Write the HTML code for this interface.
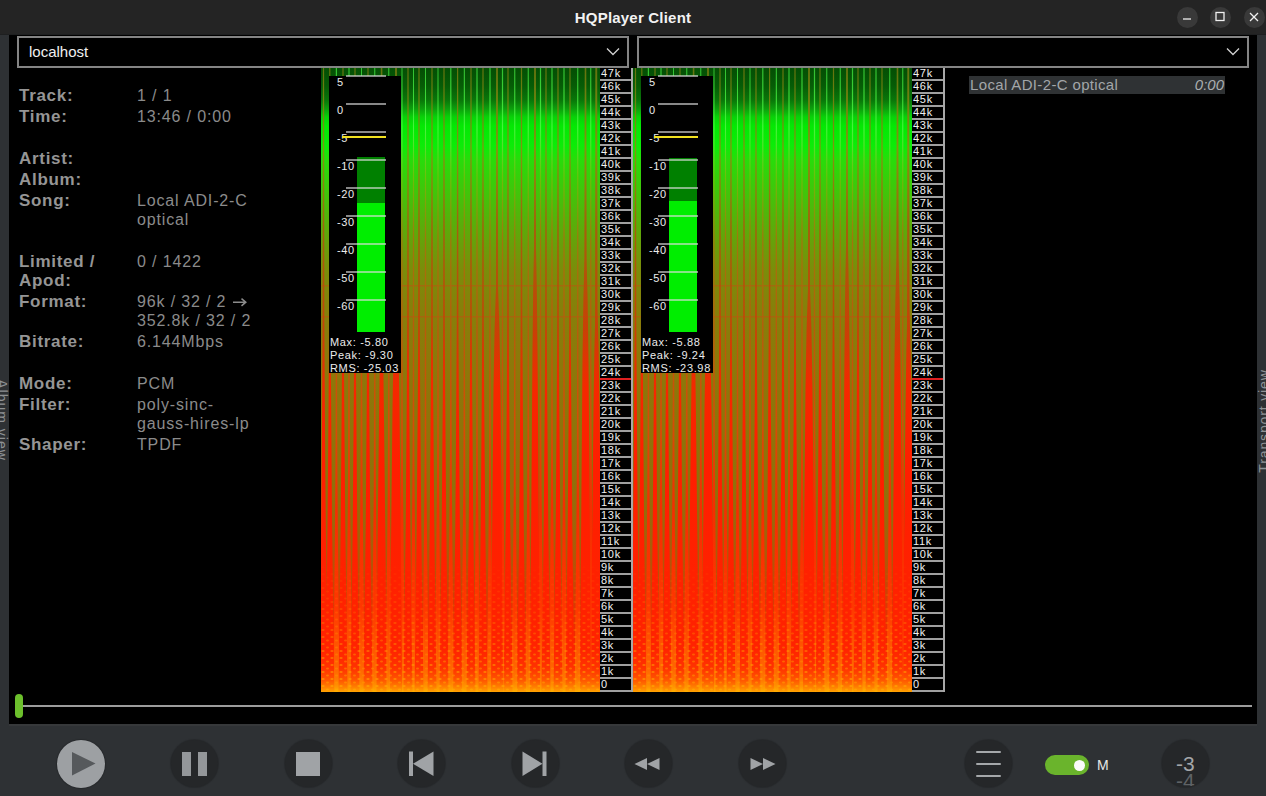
<!DOCTYPE html><html><head><meta charset="utf-8"><title>HQPlayer Client</title><style>
html,body{margin:0;padding:0}
body{width:1266px;height:796px;position:relative;overflow:hidden;background:#2e3134;font-family:"Liberation Sans",sans-serif}
.abs{position:absolute}
#title{position:absolute;left:0;top:0;width:1266px;height:34px;background:#242424;border-bottom:1px solid #1e1f20}
#title .t{position:absolute;left:0;width:1266px;top:9px;text-align:center;color:#f2f2f2;font-weight:bold;font-size:15px;letter-spacing:0.2px}
.wb{position:absolute;top:7px;width:21px;height:21px;border-radius:50%;background:#393939}
#main{position:absolute;left:9px;top:35px;width:1248px;height:689px;background:#000}
.combo{position:absolute;top:36px;height:28px;border:2px solid #848484;background:#000}
.combo .txt{position:absolute;left:10px;top:5px;color:#f0f0f0;font-size:15px}
.lab{position:absolute;left:19px;color:#959595;font-weight:bold;font-size:17px;line-height:19px;letter-spacing:0.7px}
.val{position:absolute;left:137px;color:#8b8b8b;font-size:16px;line-height:19px;letter-spacing:0.85px}
.fl{position:absolute;color:#f0f0f0;font-size:11px;line-height:12px;letter-spacing:0.7px;width:30px;white-space:nowrap}
.gl{position:absolute;width:33px;height:2px}
.mbox{position:absolute;width:72px;height:297px;background:#000}
.ml{position:absolute;color:#ececec;font-size:11px;line-height:13px;letter-spacing:0.65px;white-space:nowrap}
.btn{position:absolute;top:740px;width:47px;height:47px;border-radius:50%;background:#252729;box-shadow:0 0 1px 1px rgba(0,0,0,0.18)}
</style></head><body><div id="title"><div class="t">HQPlayer Client</div><div class="wb" style="left:1177px"></div><div class="wb" style="left:1210px"></div><div class="wb" style="left:1244px"></div></div><svg class="abs" style="left:1170px;top:0" width="96" height="36"><g stroke="#f0f0f0" stroke-width="1.3" fill="none"><line x1="13" y1="19" x2="21" y2="19"/><rect x="46" y="12.5" width="8" height="8"/><line x1="80" y1="13" x2="88" y2="21"/><line x1="88" y1="13" x2="80" y2="21"/></g></svg><div id="main"></div><div class="abs" style="left:9px;top:724px;width:1248px;height:2px;background:#36383a"></div><div class="abs" style="left:0;top:36px;width:9px;height:688px;overflow:hidden"><div class="abs" style="left:-47.85px;top:376px;width:100px;height:16px;transform:rotate(90deg);color:#8e9194;font-size:14px;line-height:16px;letter-spacing:1px;white-space:nowrap;text-align:center">Album view</div></div><div class="abs" style="left:1257px;top:36px;width:9px;height:688px;overflow:hidden"><div class="abs" style="left:-52.83px;top:376.5px;width:120px;height:16px;transform:rotate(-90deg);color:#8e9194;font-size:14px;line-height:16px;letter-spacing:0.86px;white-space:nowrap;text-align:center">Transport view</div></div><div class="combo" style="left:17px;width:608px"><div class="txt">localhost</div></div><div class="combo" style="left:637px;width:608px"></div><svg class="abs" style="left:605px;top:46px" width="16" height="12"><polyline points="2,2.5 8,8.5 14,2.5" stroke="#d0d0d0" stroke-width="1.3" fill="none"/></svg><svg class="abs" style="left:1225px;top:46px" width="16" height="12"><polyline points="2,2.5 8,8.5 14,2.5" stroke="#d0d0d0" stroke-width="1.3" fill="none"/></svg><div class="lab" style="top:86px">Track:</div><div class="val" style="top:86px">1 / 1</div><div class="lab" style="top:107px">Time:</div><div class="val" style="top:107px">13:46 / 0:00</div><div class="lab" style="top:149px">Artist:</div><div class="val" style="top:149px"></div><div class="lab" style="top:170px">Album:</div><div class="val" style="top:170px"></div><div class="lab" style="top:191px">Song:</div><div class="val" style="top:191px">Local ADI-2-C<br>optical</div><div class="lab" style="top:252px">Limited /<br>Apod:</div><div class="val" style="top:252px">0 / 1422</div><div class="lab" style="top:292px">Format:</div><div class="val" style="top:292px">96k / 32 / 2 <svg width="16" height="10" style="vertical-align:0px"><path d="M1 5.2H13.5M9.5 1.6L13.8 5.2L9.5 8.8" stroke="#8b8b8b" stroke-width="1.5" fill="none"/></svg><br>352.8k / 32 / 2</div><div class="lab" style="top:332px">Bitrate:</div><div class="val" style="top:332px">6.144Mbps</div><div class="lab" style="top:374px">Mode:</div><div class="val" style="top:374px">PCM</div><div class="lab" style="top:395px">Filter:</div><div class="val" style="top:395px">poly-sinc-<br>gauss-hires-lp</div><div class="lab" style="top:435px">Shaper:</div><div class="val" style="top:435px">TPDF</div><div class="abs" style="left:321px;top:68px"><svg width="279" height="624" viewBox="0 0 279 624" style="display:block"><defs><linearGradient id="abg" gradientUnits="userSpaceOnUse" x1="0" y1="0" x2="0" y2="624"><stop offset="0.0000" stop-color="#044e04"/><stop offset="0.0288" stop-color="#065c06"/><stop offset="0.0513" stop-color="#097609"/><stop offset="0.0657" stop-color="#0ca00c"/><stop offset="0.0785" stop-color="#08d208"/><stop offset="0.0929" stop-color="#04e804"/><stop offset="0.1250" stop-color="#0cec08"/><stop offset="0.1474" stop-color="#28dc0a"/><stop offset="0.2115" stop-color="#46c00a"/><stop offset="0.2644" stop-color="#5fa80a"/><stop offset="0.3205" stop-color="#7a8e0a"/><stop offset="0.3846" stop-color="#86800a"/><stop offset="0.4808" stop-color="#8d780a"/><stop offset="0.5769" stop-color="#8e740a"/><stop offset="0.6571" stop-color="#8f710a"/><stop offset="0.7212" stop-color="#98690a"/><stop offset="0.7853" stop-color="#af5808"/><stop offset="0.8494" stop-color="#d23e04"/><stop offset="0.9054" stop-color="#f02a01"/><stop offset="0.9615" stop-color="#ff2600"/><stop offset="1.0000" stop-color="#ff3c00"/></linearGradient><linearGradient id="ars" gradientUnits="userSpaceOnUse" x1="0" y1="0" x2="0" y2="624"><stop offset="0.0000" stop-color="#64730f"/><stop offset="0.1282" stop-color="#82960f"/><stop offset="0.2564" stop-color="#a55f0a"/><stop offset="0.4167" stop-color="#c84106"/><stop offset="0.5128" stop-color="#f52800"/><stop offset="0.6410" stop-color="#ff1e00"/><stop offset="0.9295" stop-color="#ff2300"/><stop offset="1.0000" stop-color="#ff4600"/></linearGradient><linearGradient id="aos" gradientUnits="userSpaceOnUse" x1="0" y1="0" x2="0" y2="624"><stop offset="0.0000" stop-color="#32be32"/><stop offset="0.0962" stop-color="#46f53c"/><stop offset="0.1763" stop-color="#6ebe0a"/><stop offset="0.2724" stop-color="#a0780a"/><stop offset="0.4167" stop-color="#b95a0a"/><stop offset="0.5769" stop-color="#d74b05"/><stop offset="0.7051" stop-color="#f52d00"/><stop offset="0.8654" stop-color="#ff3700"/><stop offset="1.0000" stop-color="#ff7800"/></linearGradient><pattern id="asp" patternUnits="userSpaceOnUse" width="9" height="7"><ellipse cx="2" cy="2" rx="1.7" ry="1.1" fill="#ff9c00"/><ellipse cx="6.5" cy="5.5" rx="1.5" ry="1.0" fill="#ff8800"/></pattern><linearGradient id="amg" x1="0" y1="0" x2="0" y2="1"><stop offset="0" stop-color="#fff" stop-opacity="0"/><stop offset="0.5" stop-color="#fff" stop-opacity="0.35"/><stop offset="1" stop-color="#fff" stop-opacity="0.8"/></linearGradient><mask id="amk" maskContentUnits="userSpaceOnUse"><rect x="0" y="494" width="279" height="130" fill="url(#amg)"/></mask><linearGradient id="abot" x1="0" y1="0" x2="0" y2="1"><stop offset="0" stop-color="#ff9000" stop-opacity="0"/><stop offset="0.5" stop-color="#ffa000" stop-opacity="0.25"/><stop offset="1" stop-color="#ffc000" stop-opacity="0.75"/></linearGradient></defs><rect x="0" y="0" width="279" height="624" fill="url(#abg)"/><rect x="0" y="217" width="279" height="1.5" fill="#c05010" opacity="0.5"/><rect x="0" y="248" width="279" height="1.5" fill="#c05010" opacity="0.5"/><polygon points="14.8,0.0 14.7,300.0 14.6,360.0 14.3,420.0 13.8,480.0 12.9,560.0 12.2,624.0 18.6,624.0 17.9,560.0 17.0,480.0 16.5,420.0 16.2,360.0 16.1,300.0 16.0,0.0" fill="url(#aos)"/><polygon points="27.4,0.0 27.3,300.0 27.1,360.0 26.9,420.0 26.4,480.0 25.5,560.0 24.8,624.0 31.2,624.0 30.5,560.0 29.6,480.0 29.1,420.0 28.9,360.0 28.7,300.0 28.6,0.0" fill="url(#aos)"/><polygon points="40.0,0.0 39.8,300.0 39.6,360.0 39.4,420.0 38.9,480.0 38.0,560.0 37.2,624.0 43.8,624.0 43.0,560.0 42.1,480.0 41.6,420.0 41.4,360.0 41.2,300.0 41.0,0.0" fill="url(#aos)"/><polygon points="53.2,0.0 53.1,300.0 52.9,360.0 52.7,420.0 52.2,480.0 51.3,560.0 50.5,624.0 57.0,624.0 56.3,560.0 55.4,480.0 54.9,420.0 54.6,360.0 54.5,300.0 54.3,0.0" fill="url(#aos)"/><polygon points="67.2,0.0 67.1,300.0 67.0,360.0 66.7,420.0 66.2,480.0 65.3,560.0 64.5,624.0 71.0,624.0 70.3,560.0 69.4,480.0 68.9,420.0 68.6,360.0 68.5,300.0 68.3,0.0" fill="url(#aos)"/><polygon points="80.5,0.0 80.3,300.0 80.2,360.0 79.9,420.0 79.4,480.0 78.5,560.0 77.8,624.0 84.2,624.0 83.5,560.0 82.6,480.0 82.1,420.0 81.8,360.0 81.7,300.0 81.5,0.0" fill="url(#aos)"/><polygon points="92.0,0.0 91.8,300.0 91.7,360.0 91.4,420.0 90.9,480.0 90.0,560.0 89.2,624.0 95.8,624.0 95.0,560.0 94.1,480.0 93.6,420.0 93.3,360.0 93.2,300.0 93.0,0.0" fill="url(#aos)"/><polygon points="104.0,0.0 103.8,300.0 103.7,360.0 103.4,420.0 102.9,480.0 102.0,560.0 101.2,624.0 107.8,624.0 107.0,560.0 106.1,480.0 105.6,420.0 105.3,360.0 105.2,300.0 105.0,0.0" fill="url(#aos)"/><polygon points="116.5,0.0 116.3,300.0 116.2,360.0 115.9,420.0 115.4,480.0 114.5,560.0 113.8,624.0 120.2,624.0 119.5,560.0 118.6,480.0 118.1,420.0 117.8,360.0 117.7,300.0 117.5,0.0" fill="url(#aos)"/><polygon points="129.2,0.0 129.1,300.0 129.0,360.0 128.7,420.0 128.2,480.0 127.3,560.0 126.6,624.0 133.1,624.0 132.3,560.0 131.4,480.0 130.9,420.0 130.7,360.0 130.5,300.0 130.4,0.0" fill="url(#aos)"/><polygon points="142.8,0.0 142.6,300.0 142.5,360.0 142.2,420.0 141.7,480.0 140.8,560.0 140.1,624.0 146.6,624.0 145.8,560.0 144.9,480.0 144.4,420.0 144.2,360.0 144.0,300.0 143.9,0.0" fill="url(#aos)"/><polygon points="155.4,0.0 155.3,300.0 155.2,360.0 154.9,420.0 154.4,480.0 153.5,560.0 152.8,624.0 159.2,624.0 158.5,560.0 157.6,480.0 157.1,420.0 156.8,360.0 156.7,300.0 156.6,0.0" fill="url(#aos)"/><polygon points="168.4,0.0 168.3,300.0 168.2,360.0 167.9,420.0 167.4,480.0 166.5,560.0 165.8,624.0 172.2,624.0 171.5,560.0 170.6,480.0 170.1,420.0 169.8,360.0 169.7,300.0 169.6,0.0" fill="url(#aos)"/><polygon points="180.9,0.0 180.8,300.0 180.7,360.0 180.4,420.0 179.9,480.0 179.0,560.0 178.2,624.0 184.8,624.0 184.0,560.0 183.1,480.0 182.6,420.0 182.3,360.0 182.2,300.0 182.1,0.0" fill="url(#aos)"/><polygon points="193.2,0.0 193.1,300.0 192.9,360.0 192.7,420.0 192.2,480.0 191.2,560.0 190.5,624.0 197.0,624.0 196.2,560.0 195.3,480.0 194.8,420.0 194.6,360.0 194.4,300.0 194.3,0.0" fill="url(#aos)"/><polygon points="206.7,0.0 206.6,300.0 206.4,360.0 206.2,420.0 205.7,480.0 204.8,560.0 204.0,624.0 210.5,624.0 209.8,560.0 208.8,480.0 208.3,420.0 208.1,360.0 207.9,300.0 207.8,0.0" fill="url(#aos)"/><polygon points="218.9,0.0 218.8,300.0 218.7,360.0 218.4,420.0 217.9,480.0 217.0,560.0 216.2,624.0 222.8,624.0 222.0,560.0 221.1,480.0 220.6,420.0 220.3,360.0 220.2,300.0 220.1,0.0" fill="url(#aos)"/><polygon points="230.4,0.0 230.3,300.0 230.2,360.0 229.9,420.0 229.4,480.0 228.5,560.0 227.8,624.0 234.2,624.0 233.5,560.0 232.6,480.0 232.1,420.0 231.8,360.0 231.7,300.0 231.6,0.0" fill="url(#aos)"/><polygon points="242.4,0.0 242.3,300.0 242.2,360.0 241.9,420.0 241.4,480.0 240.5,560.0 239.8,624.0 246.2,624.0 245.5,560.0 244.6,480.0 244.1,420.0 243.8,360.0 243.7,300.0 243.6,0.0" fill="url(#aos)"/><polygon points="256.2,0.0 256.1,300.0 255.9,360.0 255.7,420.0 255.2,480.0 254.2,560.0 253.5,624.0 260.0,624.0 259.2,560.0 258.4,480.0 257.9,420.0 257.6,360.0 257.4,300.0 257.3,0.0" fill="url(#aos)"/><polygon points="269.2,0.0 269.1,300.0 268.9,360.0 268.6,420.0 268.1,480.0 267.2,560.0 266.5,624.0 273.0,624.0 272.2,560.0 271.4,480.0 270.9,420.0 270.6,360.0 270.4,300.0 270.3,0.0" fill="url(#aos)"/><polygon points="1.9,0.0 1.7,250.0 1.2,330.0 0.7,400.0 0.2,460.0 -0.8,540.0 -2.0,624.0 7.0,624.0 5.8,540.0 4.8,460.0 4.3,400.0 3.8,330.0 3.3,250.0 3.1,0.0" fill="url(#ars)"/><polygon points="8.2,0.0 8.0,250.0 7.6,330.0 7.0,400.0 6.5,460.0 5.5,540.0 4.3,624.0 13.3,624.0 12.1,540.0 11.1,460.0 10.6,400.0 10.1,330.0 9.6,250.0 9.4,0.0" fill="url(#ars)"/><polygon points="21.4,0.0 21.2,250.0 20.8,330.0 20.2,400.0 19.7,460.0 18.7,540.0 17.5,624.0 26.5,624.0 25.3,540.0 24.3,460.0 23.8,400.0 23.2,330.0 22.8,250.0 22.6,0.0" fill="url(#ars)"/><polygon points="33.4,0.0 33.2,250.0 32.8,330.0 32.2,400.0 31.7,460.0 30.7,540.0 29.5,624.0 38.5,624.0 37.3,540.0 36.3,460.0 35.8,400.0 35.2,330.0 34.8,250.0 34.6,0.0" fill="url(#ars)"/><polygon points="46.4,0.0 46.2,250.0 45.8,330.0 45.2,400.0 44.7,460.0 43.7,540.0 42.5,624.0 51.5,624.0 50.3,540.0 49.3,460.0 48.8,400.0 48.2,330.0 47.8,250.0 47.6,0.0" fill="url(#ars)"/><polygon points="60.0,0.0 59.8,250.0 59.4,330.0 58.8,400.0 58.3,460.0 57.3,540.0 56.1,624.0 65.1,624.0 63.9,540.0 62.9,460.0 62.4,400.0 61.9,330.0 61.4,250.0 61.2,0.0" fill="url(#ars)"/><polygon points="74.4,0.0 74.2,250.0 73.8,330.0 73.2,400.0 72.7,460.0 71.7,540.0 70.5,624.0 79.5,624.0 78.3,540.0 77.3,460.0 76.8,400.0 76.2,330.0 75.8,250.0 75.6,0.0" fill="url(#ars)"/><polygon points="86.4,0.0 86.2,250.0 85.8,330.0 85.2,400.0 84.7,460.0 83.7,540.0 82.5,624.0 91.5,624.0 90.3,540.0 89.3,460.0 88.8,400.0 88.2,330.0 87.8,250.0 87.6,0.0" fill="url(#ars)"/><polygon points="97.4,0.0 97.2,250.0 96.8,330.0 96.2,400.0 95.7,460.0 94.7,540.0 93.5,624.0 102.5,624.0 101.3,540.0 100.3,460.0 99.8,400.0 99.2,330.0 98.8,250.0 98.6,0.0" fill="url(#ars)"/><polygon points="110.4,0.0 110.2,250.0 109.8,330.0 109.2,400.0 108.7,460.0 107.7,540.0 106.5,624.0 115.5,624.0 114.3,540.0 113.3,460.0 112.8,400.0 112.2,330.0 111.8,250.0 111.6,0.0" fill="url(#ars)"/><polygon points="122.4,0.0 122.2,250.0 121.8,330.0 121.2,400.0 120.7,460.0 119.7,540.0 118.5,624.0 127.5,624.0 126.3,540.0 125.3,460.0 124.8,400.0 124.2,330.0 123.8,250.0 123.6,0.0" fill="url(#ars)"/><polygon points="136.0,0.0 135.8,250.0 135.3,330.0 134.8,400.0 134.3,460.0 133.3,540.0 132.1,624.0 141.1,624.0 139.9,540.0 138.9,460.0 138.4,400.0 137.8,330.0 137.4,250.0 137.2,0.0" fill="url(#ars)"/><polygon points="149.4,0.0 149.2,250.0 148.8,330.0 148.2,400.0 147.7,460.0 146.7,540.0 145.5,624.0 154.5,624.0 153.3,540.0 152.3,460.0 151.8,400.0 151.2,330.0 150.8,250.0 150.6,0.0" fill="url(#ars)"/><polygon points="161.4,0.0 161.2,250.0 160.8,330.0 160.2,400.0 159.7,460.0 158.7,540.0 157.5,624.0 166.5,624.0 165.3,540.0 164.3,460.0 163.8,400.0 163.2,330.0 162.8,250.0 162.6,0.0" fill="url(#ars)"/><polygon points="175.4,0.0 175.2,250.0 174.8,330.0 174.2,400.0 173.7,460.0 172.7,540.0 171.5,624.0 180.5,624.0 179.3,540.0 178.3,460.0 177.8,400.0 177.2,330.0 176.8,250.0 176.6,0.0" fill="url(#ars)"/><polygon points="186.4,0.0 186.2,250.0 185.8,330.0 185.2,400.0 184.7,460.0 183.7,540.0 182.5,624.0 191.5,624.0 190.3,540.0 189.3,460.0 188.8,400.0 188.2,330.0 187.8,250.0 187.6,0.0" fill="url(#ars)"/><polygon points="199.9,0.0 199.7,250.0 199.2,330.0 198.7,400.0 198.2,460.0 197.2,540.0 196.0,624.0 205.0,624.0 203.8,540.0 202.8,460.0 202.3,400.0 201.8,330.0 201.3,250.0 201.1,0.0" fill="url(#ars)"/><polygon points="213.4,0.0 213.2,250.0 212.8,330.0 212.2,400.0 211.7,460.0 210.7,540.0 209.5,624.0 218.5,624.0 217.3,540.0 216.3,460.0 215.8,400.0 215.2,330.0 214.8,250.0 214.6,0.0" fill="url(#ars)"/><polygon points="224.4,0.0 224.2,250.0 223.8,330.0 223.2,400.0 222.7,460.0 221.7,540.0 220.5,624.0 229.5,624.0 228.3,540.0 227.3,460.0 226.8,400.0 226.2,330.0 225.8,250.0 225.6,0.0" fill="url(#ars)"/><polygon points="236.4,0.0 236.2,250.0 235.8,330.0 235.2,400.0 234.7,460.0 233.7,540.0 232.5,624.0 241.5,624.0 240.3,540.0 239.3,460.0 238.8,400.0 238.2,330.0 237.8,250.0 237.6,0.0" fill="url(#ars)"/><polygon points="248.4,0.0 248.2,250.0 247.8,330.0 247.2,400.0 246.7,460.0 245.7,540.0 244.5,624.0 253.5,624.0 252.3,540.0 251.3,460.0 250.8,400.0 250.2,330.0 249.8,250.0 249.6,0.0" fill="url(#ars)"/><polygon points="263.9,0.0 263.7,250.0 263.2,330.0 262.7,400.0 262.2,460.0 261.2,540.0 260.0,624.0 269.0,624.0 267.8,540.0 266.8,460.0 266.3,400.0 265.8,330.0 265.3,250.0 265.1,0.0" fill="url(#ars)"/><polygon points="274.4,0.0 274.2,250.0 273.8,330.0 273.2,400.0 272.7,460.0 271.7,540.0 270.5,624.0 279.5,624.0 278.3,540.0 277.3,460.0 276.8,400.0 276.2,330.0 275.8,250.0 275.6,0.0" fill="url(#ars)"/><polygon points="59.8,0.0 59.5,250.0 58.8,290.0 58.0,350.0 56.5,480.0 55.5,624.0 65.5,624.0 64.5,480.0 63.0,350.0 62.2,290.0 61.5,250.0 61.2,0.0" fill="url(#ars)"/><polygon points="74.2,0.0 74.0,240.0 72.5,280.0 71.5,340.0 70.0,480.0 69.0,624.0 81.0,624.0 80.0,480.0 78.5,340.0 77.5,280.0 76.0,240.0 75.8,0.0" fill="url(#ars)"/><polygon points="175.2,0.0 175.0,220.0 173.6,260.0 172.5,320.0 171.0,480.0 170.0,624.0 182.0,624.0 181.0,480.0 179.5,320.0 178.4,260.0 177.0,220.0 176.8,0.0" fill="url(#ars)"/><polygon points="213.2,0.0 213.0,180.0 212.2,220.0 211.5,280.0 210.0,480.0 209.0,624.0 219.0,624.0 218.0,480.0 216.5,280.0 215.8,220.0 215.0,180.0 214.8,0.0" fill="url(#ars)"/><polygon points="263.8,0.0 263.5,190.0 262.4,230.0 261.5,290.0 260.0,480.0 259.0,624.0 270.0,624.0 269.0,480.0 267.5,290.0 266.6,230.0 265.5,190.0 265.2,0.0" fill="url(#ars)"/><polygon points="274.8,0.0 274.5,240.0 273.4,280.0 272.5,340.0 271.0,480.0 270.0,624.0 281.0,624.0 280.0,480.0 278.5,340.0 277.6,280.0 276.5,240.0 276.2,0.0" fill="url(#ars)"/><rect x="0" y="494" width="279" height="130" fill="url(#asp)" mask="url(#amk)"/><rect x="0" y="600" width="279" height="24" fill="url(#abot)"/></svg></div><div class="abs" style="left:633px;top:68px"><svg width="279" height="624" viewBox="0 0 279 624" style="display:block"><defs><linearGradient id="bbg" gradientUnits="userSpaceOnUse" x1="0" y1="0" x2="0" y2="624"><stop offset="0.0000" stop-color="#044e04"/><stop offset="0.0288" stop-color="#065c06"/><stop offset="0.0513" stop-color="#097609"/><stop offset="0.0657" stop-color="#0ca00c"/><stop offset="0.0785" stop-color="#08d208"/><stop offset="0.0929" stop-color="#04e804"/><stop offset="0.1250" stop-color="#0cec08"/><stop offset="0.1474" stop-color="#28dc0a"/><stop offset="0.2115" stop-color="#46c00a"/><stop offset="0.2644" stop-color="#5fa80a"/><stop offset="0.3205" stop-color="#7a8e0a"/><stop offset="0.3846" stop-color="#86800a"/><stop offset="0.4808" stop-color="#8d780a"/><stop offset="0.5769" stop-color="#8e740a"/><stop offset="0.6571" stop-color="#8f710a"/><stop offset="0.7212" stop-color="#98690a"/><stop offset="0.7853" stop-color="#af5808"/><stop offset="0.8494" stop-color="#d23e04"/><stop offset="0.9054" stop-color="#f02a01"/><stop offset="0.9615" stop-color="#ff2600"/><stop offset="1.0000" stop-color="#ff3c00"/></linearGradient><linearGradient id="brs" gradientUnits="userSpaceOnUse" x1="0" y1="0" x2="0" y2="624"><stop offset="0.0000" stop-color="#64730f"/><stop offset="0.1282" stop-color="#82960f"/><stop offset="0.2564" stop-color="#a55f0a"/><stop offset="0.4167" stop-color="#c84106"/><stop offset="0.5128" stop-color="#f52800"/><stop offset="0.6410" stop-color="#ff1e00"/><stop offset="0.9295" stop-color="#ff2300"/><stop offset="1.0000" stop-color="#ff4600"/></linearGradient><linearGradient id="bos" gradientUnits="userSpaceOnUse" x1="0" y1="0" x2="0" y2="624"><stop offset="0.0000" stop-color="#32be32"/><stop offset="0.0962" stop-color="#46f53c"/><stop offset="0.1763" stop-color="#6ebe0a"/><stop offset="0.2724" stop-color="#a0780a"/><stop offset="0.4167" stop-color="#b95a0a"/><stop offset="0.5769" stop-color="#d74b05"/><stop offset="0.7051" stop-color="#f52d00"/><stop offset="0.8654" stop-color="#ff3700"/><stop offset="1.0000" stop-color="#ff7800"/></linearGradient><pattern id="bsp" patternUnits="userSpaceOnUse" width="9" height="7"><ellipse cx="2" cy="2" rx="1.7" ry="1.1" fill="#ff9c00"/><ellipse cx="6.5" cy="5.5" rx="1.5" ry="1.0" fill="#ff8800"/></pattern><linearGradient id="bmg" x1="0" y1="0" x2="0" y2="1"><stop offset="0" stop-color="#fff" stop-opacity="0"/><stop offset="0.5" stop-color="#fff" stop-opacity="0.35"/><stop offset="1" stop-color="#fff" stop-opacity="0.8"/></linearGradient><mask id="bmk" maskContentUnits="userSpaceOnUse"><rect x="0" y="494" width="279" height="130" fill="url(#bmg)"/></mask><linearGradient id="bbot" x1="0" y1="0" x2="0" y2="1"><stop offset="0" stop-color="#ff9000" stop-opacity="0"/><stop offset="0.5" stop-color="#ffa000" stop-opacity="0.25"/><stop offset="1" stop-color="#ffc000" stop-opacity="0.75"/></linearGradient></defs><rect x="0" y="0" width="279" height="624" fill="url(#bbg)"/><rect x="0" y="217" width="279" height="1.5" fill="#c05010" opacity="0.5"/><rect x="0" y="248" width="279" height="1.5" fill="#c05010" opacity="0.5"/><polygon points="14.8,0.0 14.7,300.0 14.6,360.0 14.3,420.0 13.8,480.0 12.9,560.0 12.2,624.0 18.6,624.0 17.9,560.0 17.0,480.0 16.5,420.0 16.2,360.0 16.1,300.0 16.0,0.0" fill="url(#bos)"/><polygon points="27.4,0.0 27.3,300.0 27.1,360.0 26.9,420.0 26.4,480.0 25.5,560.0 24.8,624.0 31.2,624.0 30.5,560.0 29.6,480.0 29.1,420.0 28.9,360.0 28.7,300.0 28.6,0.0" fill="url(#bos)"/><polygon points="40.0,0.0 39.8,300.0 39.6,360.0 39.4,420.0 38.9,480.0 38.0,560.0 37.2,624.0 43.8,624.0 43.0,560.0 42.1,480.0 41.6,420.0 41.4,360.0 41.2,300.0 41.0,0.0" fill="url(#bos)"/><polygon points="53.2,0.0 53.1,300.0 52.9,360.0 52.7,420.0 52.2,480.0 51.3,560.0 50.5,624.0 57.0,624.0 56.3,560.0 55.4,480.0 54.9,420.0 54.6,360.0 54.5,300.0 54.3,0.0" fill="url(#bos)"/><polygon points="67.2,0.0 67.1,300.0 67.0,360.0 66.7,420.0 66.2,480.0 65.3,560.0 64.5,624.0 71.0,624.0 70.3,560.0 69.4,480.0 68.9,420.0 68.6,360.0 68.5,300.0 68.3,0.0" fill="url(#bos)"/><polygon points="80.5,0.0 80.3,300.0 80.2,360.0 79.9,420.0 79.4,480.0 78.5,560.0 77.8,624.0 84.2,624.0 83.5,560.0 82.6,480.0 82.1,420.0 81.8,360.0 81.7,300.0 81.5,0.0" fill="url(#bos)"/><polygon points="92.0,0.0 91.8,300.0 91.7,360.0 91.4,420.0 90.9,480.0 90.0,560.0 89.2,624.0 95.8,624.0 95.0,560.0 94.1,480.0 93.6,420.0 93.3,360.0 93.2,300.0 93.0,0.0" fill="url(#bos)"/><polygon points="104.0,0.0 103.8,300.0 103.7,360.0 103.4,420.0 102.9,480.0 102.0,560.0 101.2,624.0 107.8,624.0 107.0,560.0 106.1,480.0 105.6,420.0 105.3,360.0 105.2,300.0 105.0,0.0" fill="url(#bos)"/><polygon points="116.5,0.0 116.3,300.0 116.2,360.0 115.9,420.0 115.4,480.0 114.5,560.0 113.8,624.0 120.2,624.0 119.5,560.0 118.6,480.0 118.1,420.0 117.8,360.0 117.7,300.0 117.5,0.0" fill="url(#bos)"/><polygon points="129.2,0.0 129.1,300.0 129.0,360.0 128.7,420.0 128.2,480.0 127.3,560.0 126.6,624.0 133.1,624.0 132.3,560.0 131.4,480.0 130.9,420.0 130.7,360.0 130.5,300.0 130.4,0.0" fill="url(#bos)"/><polygon points="142.8,0.0 142.6,300.0 142.5,360.0 142.2,420.0 141.7,480.0 140.8,560.0 140.1,624.0 146.6,624.0 145.8,560.0 144.9,480.0 144.4,420.0 144.2,360.0 144.0,300.0 143.9,0.0" fill="url(#bos)"/><polygon points="155.4,0.0 155.3,300.0 155.2,360.0 154.9,420.0 154.4,480.0 153.5,560.0 152.8,624.0 159.2,624.0 158.5,560.0 157.6,480.0 157.1,420.0 156.8,360.0 156.7,300.0 156.6,0.0" fill="url(#bos)"/><polygon points="168.4,0.0 168.3,300.0 168.2,360.0 167.9,420.0 167.4,480.0 166.5,560.0 165.8,624.0 172.2,624.0 171.5,560.0 170.6,480.0 170.1,420.0 169.8,360.0 169.7,300.0 169.6,0.0" fill="url(#bos)"/><polygon points="180.9,0.0 180.8,300.0 180.7,360.0 180.4,420.0 179.9,480.0 179.0,560.0 178.2,624.0 184.8,624.0 184.0,560.0 183.1,480.0 182.6,420.0 182.3,360.0 182.2,300.0 182.1,0.0" fill="url(#bos)"/><polygon points="193.2,0.0 193.1,300.0 192.9,360.0 192.7,420.0 192.2,480.0 191.2,560.0 190.5,624.0 197.0,624.0 196.2,560.0 195.3,480.0 194.8,420.0 194.6,360.0 194.4,300.0 194.3,0.0" fill="url(#bos)"/><polygon points="206.7,0.0 206.6,300.0 206.4,360.0 206.2,420.0 205.7,480.0 204.8,560.0 204.0,624.0 210.5,624.0 209.8,560.0 208.8,480.0 208.3,420.0 208.1,360.0 207.9,300.0 207.8,0.0" fill="url(#bos)"/><polygon points="218.9,0.0 218.8,300.0 218.7,360.0 218.4,420.0 217.9,480.0 217.0,560.0 216.2,624.0 222.8,624.0 222.0,560.0 221.1,480.0 220.6,420.0 220.3,360.0 220.2,300.0 220.1,0.0" fill="url(#bos)"/><polygon points="230.4,0.0 230.3,300.0 230.2,360.0 229.9,420.0 229.4,480.0 228.5,560.0 227.8,624.0 234.2,624.0 233.5,560.0 232.6,480.0 232.1,420.0 231.8,360.0 231.7,300.0 231.6,0.0" fill="url(#bos)"/><polygon points="242.4,0.0 242.3,300.0 242.2,360.0 241.9,420.0 241.4,480.0 240.5,560.0 239.8,624.0 246.2,624.0 245.5,560.0 244.6,480.0 244.1,420.0 243.8,360.0 243.7,300.0 243.6,0.0" fill="url(#bos)"/><polygon points="256.2,0.0 256.1,300.0 255.9,360.0 255.7,420.0 255.2,480.0 254.2,560.0 253.5,624.0 260.0,624.0 259.2,560.0 258.4,480.0 257.9,420.0 257.6,360.0 257.4,300.0 257.3,0.0" fill="url(#bos)"/><polygon points="269.2,0.0 269.1,300.0 268.9,360.0 268.6,420.0 268.1,480.0 267.2,560.0 266.5,624.0 273.0,624.0 272.2,560.0 271.4,480.0 270.9,420.0 270.6,360.0 270.4,300.0 270.3,0.0" fill="url(#bos)"/><polygon points="1.9,0.0 1.7,250.0 1.2,330.0 0.7,400.0 0.2,460.0 -0.8,540.0 -2.0,624.0 7.0,624.0 5.8,540.0 4.8,460.0 4.3,400.0 3.8,330.0 3.3,250.0 3.1,0.0" fill="url(#brs)"/><polygon points="8.2,0.0 8.0,250.0 7.6,330.0 7.0,400.0 6.5,460.0 5.5,540.0 4.3,624.0 13.3,624.0 12.1,540.0 11.1,460.0 10.6,400.0 10.1,330.0 9.6,250.0 9.4,0.0" fill="url(#brs)"/><polygon points="21.4,0.0 21.2,250.0 20.8,330.0 20.2,400.0 19.7,460.0 18.7,540.0 17.5,624.0 26.5,624.0 25.3,540.0 24.3,460.0 23.8,400.0 23.2,330.0 22.8,250.0 22.6,0.0" fill="url(#brs)"/><polygon points="33.4,0.0 33.2,250.0 32.8,330.0 32.2,400.0 31.7,460.0 30.7,540.0 29.5,624.0 38.5,624.0 37.3,540.0 36.3,460.0 35.8,400.0 35.2,330.0 34.8,250.0 34.6,0.0" fill="url(#brs)"/><polygon points="46.4,0.0 46.2,250.0 45.8,330.0 45.2,400.0 44.7,460.0 43.7,540.0 42.5,624.0 51.5,624.0 50.3,540.0 49.3,460.0 48.8,400.0 48.2,330.0 47.8,250.0 47.6,0.0" fill="url(#brs)"/><polygon points="60.0,0.0 59.8,250.0 59.4,330.0 58.8,400.0 58.3,460.0 57.3,540.0 56.1,624.0 65.1,624.0 63.9,540.0 62.9,460.0 62.4,400.0 61.9,330.0 61.4,250.0 61.2,0.0" fill="url(#brs)"/><polygon points="74.4,0.0 74.2,250.0 73.8,330.0 73.2,400.0 72.7,460.0 71.7,540.0 70.5,624.0 79.5,624.0 78.3,540.0 77.3,460.0 76.8,400.0 76.2,330.0 75.8,250.0 75.6,0.0" fill="url(#brs)"/><polygon points="86.4,0.0 86.2,250.0 85.8,330.0 85.2,400.0 84.7,460.0 83.7,540.0 82.5,624.0 91.5,624.0 90.3,540.0 89.3,460.0 88.8,400.0 88.2,330.0 87.8,250.0 87.6,0.0" fill="url(#brs)"/><polygon points="97.4,0.0 97.2,250.0 96.8,330.0 96.2,400.0 95.7,460.0 94.7,540.0 93.5,624.0 102.5,624.0 101.3,540.0 100.3,460.0 99.8,400.0 99.2,330.0 98.8,250.0 98.6,0.0" fill="url(#brs)"/><polygon points="110.4,0.0 110.2,250.0 109.8,330.0 109.2,400.0 108.7,460.0 107.7,540.0 106.5,624.0 115.5,624.0 114.3,540.0 113.3,460.0 112.8,400.0 112.2,330.0 111.8,250.0 111.6,0.0" fill="url(#brs)"/><polygon points="122.4,0.0 122.2,250.0 121.8,330.0 121.2,400.0 120.7,460.0 119.7,540.0 118.5,624.0 127.5,624.0 126.3,540.0 125.3,460.0 124.8,400.0 124.2,330.0 123.8,250.0 123.6,0.0" fill="url(#brs)"/><polygon points="136.0,0.0 135.8,250.0 135.3,330.0 134.8,400.0 134.3,460.0 133.3,540.0 132.1,624.0 141.1,624.0 139.9,540.0 138.9,460.0 138.4,400.0 137.8,330.0 137.4,250.0 137.2,0.0" fill="url(#brs)"/><polygon points="149.4,0.0 149.2,250.0 148.8,330.0 148.2,400.0 147.7,460.0 146.7,540.0 145.5,624.0 154.5,624.0 153.3,540.0 152.3,460.0 151.8,400.0 151.2,330.0 150.8,250.0 150.6,0.0" fill="url(#brs)"/><polygon points="161.4,0.0 161.2,250.0 160.8,330.0 160.2,400.0 159.7,460.0 158.7,540.0 157.5,624.0 166.5,624.0 165.3,540.0 164.3,460.0 163.8,400.0 163.2,330.0 162.8,250.0 162.6,0.0" fill="url(#brs)"/><polygon points="175.4,0.0 175.2,250.0 174.8,330.0 174.2,400.0 173.7,460.0 172.7,540.0 171.5,624.0 180.5,624.0 179.3,540.0 178.3,460.0 177.8,400.0 177.2,330.0 176.8,250.0 176.6,0.0" fill="url(#brs)"/><polygon points="186.4,0.0 186.2,250.0 185.8,330.0 185.2,400.0 184.7,460.0 183.7,540.0 182.5,624.0 191.5,624.0 190.3,540.0 189.3,460.0 188.8,400.0 188.2,330.0 187.8,250.0 187.6,0.0" fill="url(#brs)"/><polygon points="199.9,0.0 199.7,250.0 199.2,330.0 198.7,400.0 198.2,460.0 197.2,540.0 196.0,624.0 205.0,624.0 203.8,540.0 202.8,460.0 202.3,400.0 201.8,330.0 201.3,250.0 201.1,0.0" fill="url(#brs)"/><polygon points="213.4,0.0 213.2,250.0 212.8,330.0 212.2,400.0 211.7,460.0 210.7,540.0 209.5,624.0 218.5,624.0 217.3,540.0 216.3,460.0 215.8,400.0 215.2,330.0 214.8,250.0 214.6,0.0" fill="url(#brs)"/><polygon points="224.4,0.0 224.2,250.0 223.8,330.0 223.2,400.0 222.7,460.0 221.7,540.0 220.5,624.0 229.5,624.0 228.3,540.0 227.3,460.0 226.8,400.0 226.2,330.0 225.8,250.0 225.6,0.0" fill="url(#brs)"/><polygon points="236.4,0.0 236.2,250.0 235.8,330.0 235.2,400.0 234.7,460.0 233.7,540.0 232.5,624.0 241.5,624.0 240.3,540.0 239.3,460.0 238.8,400.0 238.2,330.0 237.8,250.0 237.6,0.0" fill="url(#brs)"/><polygon points="248.4,0.0 248.2,250.0 247.8,330.0 247.2,400.0 246.7,460.0 245.7,540.0 244.5,624.0 253.5,624.0 252.3,540.0 251.3,460.0 250.8,400.0 250.2,330.0 249.8,250.0 249.6,0.0" fill="url(#brs)"/><polygon points="263.9,0.0 263.7,250.0 263.2,330.0 262.7,400.0 262.2,460.0 261.2,540.0 260.0,624.0 269.0,624.0 267.8,540.0 266.8,460.0 266.3,400.0 265.8,330.0 265.3,250.0 265.1,0.0" fill="url(#brs)"/><polygon points="274.4,0.0 274.2,250.0 273.8,330.0 273.2,400.0 272.7,460.0 271.7,540.0 270.5,624.0 279.5,624.0 278.3,540.0 277.3,460.0 276.8,400.0 276.2,330.0 275.8,250.0 275.6,0.0" fill="url(#brs)"/><polygon points="59.8,0.0 59.5,250.0 58.8,290.0 58.0,350.0 56.5,480.0 55.5,624.0 65.5,624.0 64.5,480.0 63.0,350.0 62.2,290.0 61.5,250.0 61.2,0.0" fill="url(#brs)"/><polygon points="74.2,0.0 74.0,240.0 72.5,280.0 71.5,340.0 70.0,480.0 69.0,624.0 81.0,624.0 80.0,480.0 78.5,340.0 77.5,280.0 76.0,240.0 75.8,0.0" fill="url(#brs)"/><polygon points="175.2,0.0 175.0,220.0 173.6,260.0 172.5,320.0 171.0,480.0 170.0,624.0 182.0,624.0 181.0,480.0 179.5,320.0 178.4,260.0 177.0,220.0 176.8,0.0" fill="url(#brs)"/><polygon points="213.2,0.0 213.0,180.0 212.2,220.0 211.5,280.0 210.0,480.0 209.0,624.0 219.0,624.0 218.0,480.0 216.5,280.0 215.8,220.0 215.0,180.0 214.8,0.0" fill="url(#brs)"/><polygon points="263.8,0.0 263.5,190.0 262.4,230.0 261.5,290.0 260.0,480.0 259.0,624.0 270.0,624.0 269.0,480.0 267.5,290.0 266.6,230.0 265.5,190.0 265.2,0.0" fill="url(#brs)"/><polygon points="274.8,0.0 274.5,240.0 273.4,280.0 272.5,340.0 271.0,480.0 270.0,624.0 281.0,624.0 280.0,480.0 278.5,340.0 277.6,280.0 276.5,240.0 276.2,0.0" fill="url(#brs)"/><rect x="0" y="494" width="279" height="130" fill="url(#bsp)" mask="url(#bmk)"/><rect x="0" y="600" width="279" height="24" fill="url(#bbot)"/></svg></div><div class="abs" style="left:600px;top:68px;width:32px;height:624px;background:#000"></div><div class="fl" style="left:601px;top:67px">47k</div><div class="gl" style="left:600px;top:79px;background:#a0a0a0"></div><div class="fl" style="left:601px;top:80px">46k</div><div class="gl" style="left:600px;top:92px;background:#a0a0a0"></div><div class="fl" style="left:601px;top:93px">45k</div><div class="gl" style="left:600px;top:105px;background:#a0a0a0"></div><div class="fl" style="left:601px;top:106px">44k</div><div class="gl" style="left:600px;top:118px;background:#a0a0a0"></div><div class="fl" style="left:601px;top:119px">43k</div><div class="gl" style="left:600px;top:131px;background:#a0a0a0"></div><div class="fl" style="left:601px;top:132px">42k</div><div class="gl" style="left:600px;top:144px;background:#a0a0a0"></div><div class="fl" style="left:601px;top:145px">41k</div><div class="gl" style="left:600px;top:157px;background:#a0a0a0"></div><div class="fl" style="left:601px;top:158px">40k</div><div class="gl" style="left:600px;top:170px;background:#a0a0a0"></div><div class="fl" style="left:601px;top:171px">39k</div><div class="gl" style="left:600px;top:183px;background:#a0a0a0"></div><div class="fl" style="left:601px;top:184px">38k</div><div class="gl" style="left:600px;top:196px;background:#a0a0a0"></div><div class="fl" style="left:601px;top:197px">37k</div><div class="gl" style="left:600px;top:209px;background:#a0a0a0"></div><div class="fl" style="left:601px;top:210px">36k</div><div class="gl" style="left:600px;top:222px;background:#a0a0a0"></div><div class="fl" style="left:601px;top:223px">35k</div><div class="gl" style="left:600px;top:235px;background:#a0a0a0"></div><div class="fl" style="left:601px;top:236px">34k</div><div class="gl" style="left:600px;top:248px;background:#a0a0a0"></div><div class="fl" style="left:601px;top:249px">33k</div><div class="gl" style="left:600px;top:261px;background:#a0a0a0"></div><div class="fl" style="left:601px;top:262px">32k</div><div class="gl" style="left:600px;top:274px;background:#a0a0a0"></div><div class="fl" style="left:601px;top:275px">31k</div><div class="gl" style="left:600px;top:287px;background:#a0a0a0"></div><div class="fl" style="left:601px;top:288px">30k</div><div class="gl" style="left:600px;top:300px;background:#a0a0a0"></div><div class="fl" style="left:601px;top:301px">29k</div><div class="gl" style="left:600px;top:313px;background:#a0a0a0"></div><div class="fl" style="left:601px;top:314px">28k</div><div class="gl" style="left:600px;top:326px;background:#a0a0a0"></div><div class="fl" style="left:601px;top:327px">27k</div><div class="gl" style="left:600px;top:339px;background:#a0a0a0"></div><div class="fl" style="left:601px;top:340px">26k</div><div class="gl" style="left:600px;top:352px;background:#a0a0a0"></div><div class="fl" style="left:601px;top:353px">25k</div><div class="gl" style="left:600px;top:365px;background:#a0a0a0"></div><div class="fl" style="left:601px;top:366px">24k</div><div class="gl" style="left:600px;top:378px;background:#e02020"></div><div class="fl" style="left:601px;top:379px">23k</div><div class="gl" style="left:600px;top:391px;background:#a0a0a0"></div><div class="fl" style="left:601px;top:392px">22k</div><div class="gl" style="left:600px;top:404px;background:#a0a0a0"></div><div class="fl" style="left:601px;top:405px">21k</div><div class="gl" style="left:600px;top:417px;background:#a0a0a0"></div><div class="fl" style="left:601px;top:418px">20k</div><div class="gl" style="left:600px;top:430px;background:#a0a0a0"></div><div class="fl" style="left:601px;top:431px">19k</div><div class="gl" style="left:600px;top:443px;background:#a0a0a0"></div><div class="fl" style="left:601px;top:444px">18k</div><div class="gl" style="left:600px;top:456px;background:#a0a0a0"></div><div class="fl" style="left:601px;top:457px">17k</div><div class="gl" style="left:600px;top:469px;background:#a0a0a0"></div><div class="fl" style="left:601px;top:470px">16k</div><div class="gl" style="left:600px;top:482px;background:#a0a0a0"></div><div class="fl" style="left:601px;top:483px">15k</div><div class="gl" style="left:600px;top:495px;background:#a0a0a0"></div><div class="fl" style="left:601px;top:496px">14k</div><div class="gl" style="left:600px;top:508px;background:#a0a0a0"></div><div class="fl" style="left:601px;top:509px">13k</div><div class="gl" style="left:600px;top:521px;background:#a0a0a0"></div><div class="fl" style="left:601px;top:522px">12k</div><div class="gl" style="left:600px;top:534px;background:#a0a0a0"></div><div class="fl" style="left:601px;top:535px">11k</div><div class="gl" style="left:600px;top:547px;background:#a0a0a0"></div><div class="fl" style="left:601px;top:548px">10k</div><div class="gl" style="left:600px;top:560px;background:#a0a0a0"></div><div class="fl" style="left:601px;top:561px">9k</div><div class="gl" style="left:600px;top:573px;background:#a0a0a0"></div><div class="fl" style="left:601px;top:574px">8k</div><div class="gl" style="left:600px;top:586px;background:#a0a0a0"></div><div class="fl" style="left:601px;top:587px">7k</div><div class="gl" style="left:600px;top:599px;background:#a0a0a0"></div><div class="fl" style="left:601px;top:600px">6k</div><div class="gl" style="left:600px;top:612px;background:#a0a0a0"></div><div class="fl" style="left:601px;top:613px">5k</div><div class="gl" style="left:600px;top:625px;background:#a0a0a0"></div><div class="fl" style="left:601px;top:626px">4k</div><div class="gl" style="left:600px;top:638px;background:#a0a0a0"></div><div class="fl" style="left:601px;top:639px">3k</div><div class="gl" style="left:600px;top:651px;background:#a0a0a0"></div><div class="fl" style="left:601px;top:652px">2k</div><div class="gl" style="left:600px;top:664px;background:#a0a0a0"></div><div class="fl" style="left:601px;top:665px">1k</div><div class="gl" style="left:600px;top:677px;background:#a0a0a0"></div><div class="fl" style="left:601px;top:678px">0</div><div class="gl" style="left:600px;top:690px;background:#a0a0a0"></div><div class="abs" style="left:631px;top:68px;width:2px;height:624px;background:#a8a8a8"></div><div class="abs" style="left:912px;top:68px;width:32px;height:624px;background:#000"></div><div class="fl" style="left:913px;top:67px">47k</div><div class="gl" style="left:912px;top:79px;background:#a0a0a0"></div><div class="fl" style="left:913px;top:80px">46k</div><div class="gl" style="left:912px;top:92px;background:#a0a0a0"></div><div class="fl" style="left:913px;top:93px">45k</div><div class="gl" style="left:912px;top:105px;background:#a0a0a0"></div><div class="fl" style="left:913px;top:106px">44k</div><div class="gl" style="left:912px;top:118px;background:#a0a0a0"></div><div class="fl" style="left:913px;top:119px">43k</div><div class="gl" style="left:912px;top:131px;background:#a0a0a0"></div><div class="fl" style="left:913px;top:132px">42k</div><div class="gl" style="left:912px;top:144px;background:#a0a0a0"></div><div class="fl" style="left:913px;top:145px">41k</div><div class="gl" style="left:912px;top:157px;background:#a0a0a0"></div><div class="fl" style="left:913px;top:158px">40k</div><div class="gl" style="left:912px;top:170px;background:#a0a0a0"></div><div class="fl" style="left:913px;top:171px">39k</div><div class="gl" style="left:912px;top:183px;background:#a0a0a0"></div><div class="fl" style="left:913px;top:184px">38k</div><div class="gl" style="left:912px;top:196px;background:#a0a0a0"></div><div class="fl" style="left:913px;top:197px">37k</div><div class="gl" style="left:912px;top:209px;background:#a0a0a0"></div><div class="fl" style="left:913px;top:210px">36k</div><div class="gl" style="left:912px;top:222px;background:#a0a0a0"></div><div class="fl" style="left:913px;top:223px">35k</div><div class="gl" style="left:912px;top:235px;background:#a0a0a0"></div><div class="fl" style="left:913px;top:236px">34k</div><div class="gl" style="left:912px;top:248px;background:#a0a0a0"></div><div class="fl" style="left:913px;top:249px">33k</div><div class="gl" style="left:912px;top:261px;background:#a0a0a0"></div><div class="fl" style="left:913px;top:262px">32k</div><div class="gl" style="left:912px;top:274px;background:#a0a0a0"></div><div class="fl" style="left:913px;top:275px">31k</div><div class="gl" style="left:912px;top:287px;background:#a0a0a0"></div><div class="fl" style="left:913px;top:288px">30k</div><div class="gl" style="left:912px;top:300px;background:#a0a0a0"></div><div class="fl" style="left:913px;top:301px">29k</div><div class="gl" style="left:912px;top:313px;background:#a0a0a0"></div><div class="fl" style="left:913px;top:314px">28k</div><div class="gl" style="left:912px;top:326px;background:#a0a0a0"></div><div class="fl" style="left:913px;top:327px">27k</div><div class="gl" style="left:912px;top:339px;background:#a0a0a0"></div><div class="fl" style="left:913px;top:340px">26k</div><div class="gl" style="left:912px;top:352px;background:#a0a0a0"></div><div class="fl" style="left:913px;top:353px">25k</div><div class="gl" style="left:912px;top:365px;background:#a0a0a0"></div><div class="fl" style="left:913px;top:366px">24k</div><div class="gl" style="left:912px;top:378px;background:#e02020"></div><div class="fl" style="left:913px;top:379px">23k</div><div class="gl" style="left:912px;top:391px;background:#a0a0a0"></div><div class="fl" style="left:913px;top:392px">22k</div><div class="gl" style="left:912px;top:404px;background:#a0a0a0"></div><div class="fl" style="left:913px;top:405px">21k</div><div class="gl" style="left:912px;top:417px;background:#a0a0a0"></div><div class="fl" style="left:913px;top:418px">20k</div><div class="gl" style="left:912px;top:430px;background:#a0a0a0"></div><div class="fl" style="left:913px;top:431px">19k</div><div class="gl" style="left:912px;top:443px;background:#a0a0a0"></div><div class="fl" style="left:913px;top:444px">18k</div><div class="gl" style="left:912px;top:456px;background:#a0a0a0"></div><div class="fl" style="left:913px;top:457px">17k</div><div class="gl" style="left:912px;top:469px;background:#a0a0a0"></div><div class="fl" style="left:913px;top:470px">16k</div><div class="gl" style="left:912px;top:482px;background:#a0a0a0"></div><div class="fl" style="left:913px;top:483px">15k</div><div class="gl" style="left:912px;top:495px;background:#a0a0a0"></div><div class="fl" style="left:913px;top:496px">14k</div><div class="gl" style="left:912px;top:508px;background:#a0a0a0"></div><div class="fl" style="left:913px;top:509px">13k</div><div class="gl" style="left:912px;top:521px;background:#a0a0a0"></div><div class="fl" style="left:913px;top:522px">12k</div><div class="gl" style="left:912px;top:534px;background:#a0a0a0"></div><div class="fl" style="left:913px;top:535px">11k</div><div class="gl" style="left:912px;top:547px;background:#a0a0a0"></div><div class="fl" style="left:913px;top:548px">10k</div><div class="gl" style="left:912px;top:560px;background:#a0a0a0"></div><div class="fl" style="left:913px;top:561px">9k</div><div class="gl" style="left:912px;top:573px;background:#a0a0a0"></div><div class="fl" style="left:913px;top:574px">8k</div><div class="gl" style="left:912px;top:586px;background:#a0a0a0"></div><div class="fl" style="left:913px;top:587px">7k</div><div class="gl" style="left:912px;top:599px;background:#a0a0a0"></div><div class="fl" style="left:913px;top:600px">6k</div><div class="gl" style="left:912px;top:612px;background:#a0a0a0"></div><div class="fl" style="left:913px;top:613px">5k</div><div class="gl" style="left:912px;top:625px;background:#a0a0a0"></div><div class="fl" style="left:913px;top:626px">4k</div><div class="gl" style="left:912px;top:638px;background:#a0a0a0"></div><div class="fl" style="left:913px;top:639px">3k</div><div class="gl" style="left:912px;top:651px;background:#a0a0a0"></div><div class="fl" style="left:913px;top:652px">2k</div><div class="gl" style="left:912px;top:664px;background:#a0a0a0"></div><div class="fl" style="left:913px;top:665px">1k</div><div class="gl" style="left:912px;top:677px;background:#a0a0a0"></div><div class="fl" style="left:913px;top:678px">0</div><div class="gl" style="left:912px;top:690px;background:#a0a0a0"></div><div class="abs" style="left:943px;top:68px;width:2px;height:624px;background:#a8a8a8"></div><div class="mbox" style="left:329px;top:76px"></div><div class="abs" style="left:357px;top:157px;width:28px;height:46px;background:#008000"></div><div class="abs" style="left:357px;top:203px;width:28px;height:129px;background:#00ee00"></div><div class="abs" style="left:346px;top:75px;width:40px;height:2px;background:rgba(220,220,220,0.62)"></div><div class="ml" style="left:337px;top:76px">5</div><div class="abs" style="left:346px;top:103px;width:40px;height:2px;background:rgba(220,220,220,0.62)"></div><div class="ml" style="left:337px;top:104px">0</div><div class="abs" style="left:346px;top:131px;width:40px;height:2px;background:rgba(220,220,220,0.62)"></div><div class="ml" style="left:337px;top:132px">-5</div><div class="abs" style="left:346px;top:159px;width:40px;height:2px;background:rgba(220,220,220,0.62)"></div><div class="ml" style="left:337px;top:160px">-10</div><div class="abs" style="left:346px;top:187px;width:40px;height:2px;background:rgba(220,220,220,0.62)"></div><div class="ml" style="left:337px;top:188px">-20</div><div class="abs" style="left:346px;top:215px;width:40px;height:2px;background:rgba(220,220,220,0.62)"></div><div class="ml" style="left:337px;top:216px">-30</div><div class="abs" style="left:346px;top:243px;width:40px;height:2px;background:rgba(220,220,220,0.62)"></div><div class="ml" style="left:337px;top:244px">-40</div><div class="abs" style="left:346px;top:271px;width:40px;height:2px;background:rgba(220,220,220,0.62)"></div><div class="ml" style="left:337px;top:272px">-50</div><div class="abs" style="left:346px;top:299px;width:40px;height:2px;background:rgba(220,220,220,0.62)"></div><div class="ml" style="left:337px;top:300px">-60</div><div class="abs" style="left:342px;top:136px;width:44px;height:2px;background:#f0e020"></div><div class="ml" style="left:330px;top:336px">Max: -5.80</div><div class="ml" style="left:330px;top:349px">Peak: -9.30</div><div class="ml" style="left:330px;top:362px">RMS: -25.03</div><div class="mbox" style="left:641px;top:76px"></div><div class="abs" style="left:669px;top:158px;width:28px;height:43px;background:#008000"></div><div class="abs" style="left:669px;top:201px;width:28px;height:131px;background:#00ee00"></div><div class="abs" style="left:658px;top:75px;width:40px;height:2px;background:rgba(220,220,220,0.62)"></div><div class="ml" style="left:649px;top:76px">5</div><div class="abs" style="left:658px;top:103px;width:40px;height:2px;background:rgba(220,220,220,0.62)"></div><div class="ml" style="left:649px;top:104px">0</div><div class="abs" style="left:658px;top:131px;width:40px;height:2px;background:rgba(220,220,220,0.62)"></div><div class="ml" style="left:649px;top:132px">-5</div><div class="abs" style="left:658px;top:159px;width:40px;height:2px;background:rgba(220,220,220,0.62)"></div><div class="ml" style="left:649px;top:160px">-10</div><div class="abs" style="left:658px;top:187px;width:40px;height:2px;background:rgba(220,220,220,0.62)"></div><div class="ml" style="left:649px;top:188px">-20</div><div class="abs" style="left:658px;top:215px;width:40px;height:2px;background:rgba(220,220,220,0.62)"></div><div class="ml" style="left:649px;top:216px">-30</div><div class="abs" style="left:658px;top:243px;width:40px;height:2px;background:rgba(220,220,220,0.62)"></div><div class="ml" style="left:649px;top:244px">-40</div><div class="abs" style="left:658px;top:271px;width:40px;height:2px;background:rgba(220,220,220,0.62)"></div><div class="ml" style="left:649px;top:272px">-50</div><div class="abs" style="left:658px;top:299px;width:40px;height:2px;background:rgba(220,220,220,0.62)"></div><div class="ml" style="left:649px;top:300px">-60</div><div class="abs" style="left:654px;top:136px;width:44px;height:2px;background:#f0e020"></div><div class="ml" style="left:642px;top:336px">Max: -5.88</div><div class="ml" style="left:642px;top:349px">Peak: -9.24</div><div class="ml" style="left:642px;top:362px">RMS: -23.98</div><div class="abs" style="left:969px;top:76px;width:256px;height:18px;background:#2f3234"></div><div class="abs" style="left:970px;top:77px;color:#a2a6a9;font-size:15px;line-height:16px;letter-spacing:0.35px;white-space:nowrap">Local ADI-2-C optical</div><div class="abs" style="left:1185px;top:77px;width:39px;text-align:right;color:#a9adb0;font-size:15px;line-height:16px;font-style:italic">0:00</div><div class="abs" style="left:20px;top:705px;width:1232px;height:2px;background:#9c9c9c"></div><div class="abs" style="left:15px;top:694px;width:8px;height:24px;border-radius:4px;background:#6cbf2c"></div><div class="btn" style="left:57px;top:740px;width:48px;height:48px;background:#9da0a3"></div><svg class="abs" style="left:71px;top:751px" width="26" height="26"><polygon points="1,1 24.5,12.5 1,24.5" fill="#56595c"/></svg><div class="btn" style="left:171px"></div><div class="btn" style="left:285px"></div><div class="btn" style="left:398px"></div><div class="btn" style="left:512px"></div><div class="btn" style="left:625px"></div><div class="btn" style="left:739px"></div><div class="btn" style="left:965px"></div><div class="btn" style="left:1162px"></div><div class="abs" style="left:182px;top:752px;width:9px;height:24px;background:#94979a"></div><div class="abs" style="left:198px;top:752px;width:9px;height:24px;background:#94979a"></div><div class="abs" style="left:296px;top:752px;width:24px;height:24px;background:#a0a3a6"></div><svg class="abs" style="left:405px;top:748px" width="32" height="32"><rect x="4" y="3.5" width="4" height="24.5" fill="#a0a3a6"/><polygon points="8,15.7 28.5,3.5 28.5,28" fill="#a0a3a6"/></svg><svg class="abs" style="left:518px;top:748px" width="32" height="32"><rect x="24.5" y="3.5" width="4" height="24.5" fill="#a0a3a6"/><polygon points="4.5,3.5 24.5,15.7 4.5,28" fill="#a0a3a6"/></svg><svg class="abs" style="left:632px;top:756px" width="30" height="16"><polygon points="2.5,8 15,2 15,14" fill="#a0a3a6"/><polygon points="15,8 27.5,2 27.5,14" fill="#a0a3a6"/></svg><svg class="abs" style="left:748px;top:756px" width="30" height="16"><polygon points="2.5,2 15,8 2.5,14" fill="#a0a3a6"/><polygon points="15,2 27.5,8 15,14" fill="#a0a3a6"/></svg><div class="abs" style="left:976px;top:751px;width:25px;height:2px;border-radius:1px;background:#a5a8aa"></div><div class="abs" style="left:976px;top:763px;width:25px;height:2px;border-radius:1px;background:#a5a8aa"></div><div class="abs" style="left:976px;top:775px;width:25px;height:2px;border-radius:1px;background:#a5a8aa"></div><div class="abs" style="left:1045px;top:755px;width:44px;height:20px;border-radius:10px;background:#6ab42c"></div><div class="abs" style="left:1074px;top:760px;width:11px;height:11px;border-radius:50%;background:#fafafa"></div><div class="abs" style="left:1097px;top:757px;color:#e6e6e6;font-size:14px;line-height:16px">M</div><div class="abs" style="left:1160px;top:772px;width:50px;height:14px;overflow:hidden"><div style="position:absolute;left:16px;top:-2px;color:#5f6265;font-size:21px;line-height:22px">-4</div></div><div class="abs" style="left:1176px;top:753px;color:#a3a6a9;font-size:21px;line-height:22px">-3</div></body></html>
